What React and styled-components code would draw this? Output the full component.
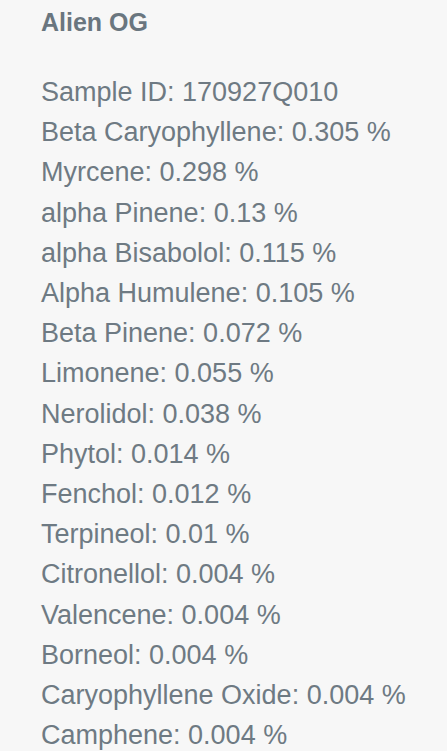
import React from "react";
import styled, { createGlobalStyle } from "styled-components";

const Global = createGlobalStyle`
  html, body { margin: 0; padding: 0; background: #f7f7f7; }
  body { font-family: "Liberation Sans", Arial, sans-serif; }
`;

const Page = styled.div`
  padding: 2px 0 0 41px;
  color: #6e7a83;
  min-height: 749px;
  background: #f7f7f7;
`;

const Title = styled.h1`
  margin: 0;
  font-size: 25px;
  font-weight: 700;
  line-height: 40px;
  color: #6a767f;
`;

const List = styled.ul`
  list-style: none;
  margin: 30px 0 0;
  padding: 0;
`;

const Row = styled.li`
  font-size: 27px;
  line-height: 40.2px;
  white-space: nowrap;
`;

const rows = [
  "Sample ID: 170927Q010",
  "Beta Caryophyllene: 0.305 %",
  "Myrcene: 0.298 %",
  "alpha Pinene: 0.13 %",
  "alpha Bisabolol: 0.115 %",
  "Alpha Humulene: 0.105 %",
  "Beta Pinene: 0.072 %",
  "Limonene: 0.055 %",
  "Nerolidol: 0.038 %",
  "Phytol: 0.014 %",
  "Fenchol: 0.012 %",
  "Terpineol: 0.01 %",
  "Citronellol: 0.004 %",
  "Valencene: 0.004 %",
  "Borneol: 0.004 %",
  "Caryophyllene Oxide: 0.004 %",
  "Camphene: 0.004 %",
];

export default function App() {
  return (
    <>
      <Global />
      <Page>
        <Title>Alien OG</Title>
        <List>
          {rows.map((r) => (
            <Row key={r}>{r}</Row>
          ))}
        </List>
      </Page>
    </>
  );
}
